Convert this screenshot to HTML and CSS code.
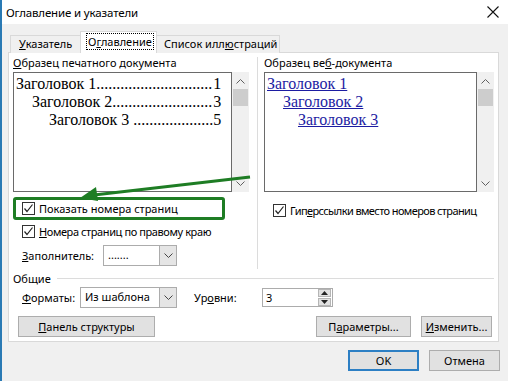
FILE: index.html
```html
<!DOCTYPE html>
<html lang="ru">
<head>
    <meta charset="UTF-8">
    <title>Оглавление и указатели</title>
    <link rel="stylesheet" href="styles.css">
</head>
<body>
<div class="window">
    <div class="titlebar">
        <span class="title">Оглавление и указатели</span>
        <svg class="close" width="12" height="12" viewBox="0 0 12 12"><path d="M0.5 0.5L11.5 11.5M11.5 0.5L0.5 11.5" stroke="#111" stroke-width="1.1" fill="none"/></svg>
    </div>

    <div class="content">
        <div class="tabs">
            <div class="tab tab-index"><u>У</u>казатель</div>
            <div class="tab tab-toc active"><span class="focus">О<u>г</u>лавление</span></div>
            <div class="tab tab-list">Список илл<u>ю</u>страций</div>
        </div>

        <div class="panel">
            <div class="columns">
                <!-- печатный документ -->
                <div class="col col-left">
                    <div class="label"><u>О</u>бразец печатного документа</div>
                    <div class="preview">
                        <div class="preview-text">
                            <div class="toc lvl1"><span>Заголовок 1</span><span class="dots">.............................</span><span class="num">1</span></div>
                            <div class="toc lvl2"><span>Заголовок 2</span><span class="dots">.........................</span><span class="num">3</span></div>
                            <div class="toc lvl3"><span>Заголовок 3&nbsp;</span><span class="dots">....................</span><span class="num">5</span></div>
                        </div>
                        <div class="scrollbar">
                            <svg width="9" height="5" viewBox="0 0 9 5"><path d="M0.5 4.5L4.5 0.5L8.5 4.5" stroke="#606060" fill="none"/></svg>
                            <div class="thumb"></div>
                            <svg class="down" width="9" height="5" viewBox="0 0 9 5"><path d="M0.5 0.5L4.5 4.5L8.5 0.5" stroke="#606060" fill="none"/></svg>
                        </div>
                    </div>

                    <div class="check-row highlight">
                        <span class="checkbox"><svg width="11" height="11" viewBox="0 0 11 11"><path d="M1.5 5.5L4 8.5L9.5 1.5" stroke="#222" stroke-width="1.2" fill="none"/></svg></span>
                        <span>Показать номера страниц</span>
                    </div>
                    <div class="check-row plain">
                        <span class="checkbox"><svg width="11" height="11" viewBox="0 0 11 11"><path d="M1.5 5.5L4 8.5L9.5 1.5" stroke="#222" stroke-width="1.2" fill="none"/></svg></span>
                        <span class="tight"><u>Н</u>омера страниц по правому краю</span>
                    </div>
                    <div class="field-row filler">
                        <span class="field-label filler-label"><u>З</u>аполнитель:</span>
                        <div class="select select-filler">
                            <span class="select-value">.......</span>
                            <span class="select-btn"><svg width="9" height="5" viewBox="0 0 9 5"><path d="M0.5 0.5L4.5 4.5L8.5 0.5" stroke="#444" fill="none"/></svg></span>
                        </div>
                    </div>
                </div>

                <!-- веб-документ -->
                <div class="col col-right">
                    <div class="label">Образец ве<u>б</u>-документа</div>
                    <div class="preview preview-web">
                        <div class="preview-text">
                            <div class="link lvl1">Заголовок 1</div>
                            <div class="link lvl2">Заголовок 2</div>
                            <div class="link lvl3">Заголовок 3</div>
                        </div>
                        <div class="scrollbar">
                            <svg width="9" height="5" viewBox="0 0 9 5"><path d="M0.5 4.5L4.5 0.5L8.5 4.5" stroke="#606060" fill="none"/></svg>
                            <div class="thumb"></div>
                            <svg class="down" width="9" height="5" viewBox="0 0 9 5"><path d="M0.5 0.5L4.5 4.5L8.5 0.5" stroke="#606060" fill="none"/></svg>
                        </div>
                    </div>
                    <div class="check-row web-check">
                        <span class="checkbox"><svg width="11" height="11" viewBox="0 0 11 11"><path d="M1.5 5.5L4 8.5L9.5 1.5" stroke="#222" stroke-width="1.2" fill="none"/></svg></span>
                        <span class="tighter">Гип<u>е</u>рссылки вместо номеров страниц</span>
                    </div>
                </div>
            </div>

            <div class="group-title"><span>Общие</span><div class="group-line"></div></div>

            <div class="field-row formats">
                <span class="field-label formats-label"><u>Ф</u>орматы:</span>
                <div class="select select-format">
                    <span class="select-value">Из шаблона</span>
                    <span class="select-btn"><svg width="9" height="5" viewBox="0 0 9 5"><path d="M0.5 0.5L4.5 4.5L8.5 0.5" stroke="#444" fill="none"/></svg></span>
                </div>
                <span class="field-label levels-label">Ур<u>о</u>вни:</span>
                <div class="spinner">
                    <span class="spin-value">3</span>
                    <span class="spin-btns">
                        <span class="spin-btn"><svg width="7" height="4" viewBox="0 0 7 4"><path d="M0 4L3.5 0L7 4Z" fill="#222"/></svg></span>
                        <span class="spin-btn"><svg width="7" height="4" viewBox="0 0 7 4"><path d="M0 0L3.5 4L7 0Z" fill="#222"/></svg></span>
                    </span>
                </div>
            </div>

            <div class="button-row">
                <button class="btn btn-outline"><u>П</u>анель структуры</button>
                <span class="spacer"></span>
                <button class="btn btn-params">П<u>а</u>раметры...</button>
                <button class="btn btn-edit"><u>И</u>зменить...</button>
            </div>
        </div>

        <div class="footer">
            <button class="btn btn-ok">OK</button>
            <button class="btn">Отмена</button>
        </div>
    </div>

    <!-- стрелка-указатель поверх диалога -->
    <svg class="arrow" width="508" height="381" viewBox="0 0 508 381">
        <path d="M250 177L94 195" stroke="#1e7d24" stroke-width="3" fill="none"/>
        <path d="M80 198L96 187L98 201Z" fill="#1e7d24"/>
    </svg>
</div>
</body>
</html>
```

FILE: styles.css
```css
body {
    margin: 0;
    font-family: "Noto Sans", sans-serif;
    font-size: 11px;
    color: #000;
}

.window {
    position: relative;
    width: 508px;
    height: 381px;
    box-sizing: border-box;
    border-left: 2px solid #2a7ab4;
    background-color: #f0f0f0;
    overflow: hidden;
}

.titlebar {
    height: 24px;
    background-color: #fff;
    display: flex;
    align-items: center;
    justify-content: space-between;
    padding: 0 9px 0 4px;
}

.title {
    font-size: 11.5px;
    letter-spacing: -0.15px;
}

.content {
    padding: 8px 0 0 6px;
}

/* вкладки */
.tabs {
    display: flex;
    align-items: flex-end;
    height: 21px;
    padding-left: 2px;
    margin-bottom: -1px;
    position: relative;
    z-index: 1;
}

.tab {
    box-sizing: border-box;
    height: 18px;
    line-height: 16px;
    padding-left: 8px;
    border: 1px solid #d9d9d9;
    border-bottom: none;
    background-color: #f0f0f0;
    white-space: nowrap;
}

.tab-index {
    width: 70px;
    border-right: none;
}

.tab-toc {
    width: 77px;
}

.tab-list {
    width: 123px;
    padding-left: 7px;
    border-left: none;
}

.tab.active {
    height: 22px;
    padding-left: 5px;
    padding-top: 2px;
    background-color: #fff;
}

.focus {
    border: 1px dotted #000;
    padding: 0 1px;
}

.panel {
    width: 491px;
    height: 290px;
    box-sizing: border-box;
    background-color: #fff;
    border: 1px solid #d9d9d9;
}

.columns {
    display: flex;
    height: 216px;
}

.col-left {
    flex-shrink: 0;
    width: 248px;
    box-sizing: border-box;
    padding: 2px 0 0 4px;
}

.col-right {
    flex: 1;
    min-width: 0;
    margin-top: 4px;
    padding: 0 0 0 6px;
    border-left: 1px solid #dcdcdc;
}

.label {
    height: 16px;
    line-height: 16px;
    margin-bottom: 1px;
    white-space: nowrap;
}

.col-right .label {
    margin-top: -2px;
}

/* образцы */
.preview {
    display: flex;
    width: 236px;
    height: 120px;
}

.preview-web {
    width: 230px;
}

.preview-text {
    flex: 1;
    border: 1px solid #6a6a6a;
    padding: 2px 10px 0 2px;
    font-family: "Liberation Serif", serif;
    font-size: 16px;
    line-height: 18px;
}

.toc {
    display: flex;
    white-space: nowrap;
}

.num {
    margin-left: auto;
}

.lvl2 {
    padding-left: 16px;
}

.lvl3 {
    padding-left: 33px;
}

.link {
    color: #1c1ca2;
    text-decoration: underline;
    width: max-content;
}

.link.lvl2 {
    margin-left: 16px;
    padding-left: 0;
}

.link.lvl3 {
    margin-left: 31px;
    padding-left: 0;
}

.scrollbar {
    width: 17px;
    background-color: #f0f0f0;
    display: flex;
    flex-direction: column;
    align-items: center;
    padding-top: 7px;
    box-sizing: border-box;
}

.thumb {
    width: 15px;
    height: 17px;
    margin-top: 5px;
    background-color: #cdcdcd;
}

.scrollbar .down {
    margin-top: auto;
    margin-bottom: 6px;
}

/* флажки */
.check-row {
    display: flex;
    align-items: center;
    gap: 4px;
    white-space: nowrap;
    height: 16px;
}

.checkbox {
    flex-shrink: 0;
    width: 13px;
    height: 13px;
    box-sizing: border-box;
    border: 1px solid #333;
    background-color: #fff;
    display: flex;
    align-items: center;
    justify-content: center;
}

.tight {
    letter-spacing: -0.4px;
}

.tighter {
    letter-spacing: -0.6px;
}

.highlight {
    box-sizing: border-box;
    width: 212px;
    height: 23px;
    margin-top: 5px;
    padding-left: 6px;
    border: 3px solid #1e7d24;
    border-radius: 3px;
}

.plain {
    margin-top: 3px;
    padding-left: 9px;
}

.web-check {
    margin-top: 10px;
    padding-left: 9px;
}

/* поля */
.field-row {
    display: flex;
    align-items: center;
}

.filler {
    margin-top: 6px;
    padding-left: 9px;
}

.field-label {
    white-space: nowrap;
}

.filler-label {
    width: 81px;
}

.formats-label {
    width: 58px;
}

.levels-label {
    width: 68px;
    margin-left: 17px;
}

.select {
    display: flex;
    height: 21px;
    box-sizing: border-box;
    border: 1px solid #acacac;
    background-color: #fff;
}

.select-filler {
    width: 74px;
}

.select-format {
    width: 97px;
}

.select-value {
    flex: 1;
    padding-left: 4px;
    line-height: 18px;
    white-space: nowrap;
}

.select-btn {
    width: 16px;
    background-color: #e5e5e5;
    border-left: 1px solid #acacac;
    display: flex;
    align-items: center;
    justify-content: center;
}

.group-title {
    display: flex;
    align-items: center;
    gap: 6px;
    height: 16px;
    padding: 1px 4px 0 4px;
}

.group-line {
    flex: 1;
    height: 1px;
    background-color: #dcdcdc;
}

.formats {
    margin-top: 1px;
    padding-left: 13px;
}

.spinner {
    display: flex;
    width: 71px;
    height: 19px;
    box-sizing: border-box;
    border: 1px solid #acacac;
    background-color: #fff;
}

.spin-value {
    flex: 1;
    padding-left: 3px;
    line-height: 17px;
}

.spin-btns {
    display: flex;
    flex-direction: column;
    gap: 1px;
    padding: 0 1px;
}

.spin-btn {
    width: 13px;
    flex: 1;
    background-color: #e1e1e1;
    border: 1px solid #b5b5b5;
    box-sizing: border-box;
    display: flex;
    align-items: center;
    justify-content: center;
}

/* кнопки */
.button-row {
    display: flex;
    margin-top: 8px;
    padding: 0 6px 0 9px;
}

.spacer {
    flex: 1;
}

.btn {
    height: 21px;
    box-sizing: border-box;
    border: 1px solid #adadad;
    background-color: #e1e1e1;
    font-family: "Noto Sans", sans-serif;
    font-size: 11px;
    color: #000;
    padding: 0;
    width: 71px;
}

.btn-outline {
    width: 137px;
}

.btn-params {
    width: 95px;
    margin-right: 10px;
}

.footer {
    display: flex;
    justify-content: flex-end;
    gap: 10px;
    padding: 8px 8px 0 0;
}

.btn-ok {
    border: 2px solid #2c7fc4;
}

.arrow {
    position: absolute;
    left: -2px;
    top: 0;
    pointer-events: none;
}
```
